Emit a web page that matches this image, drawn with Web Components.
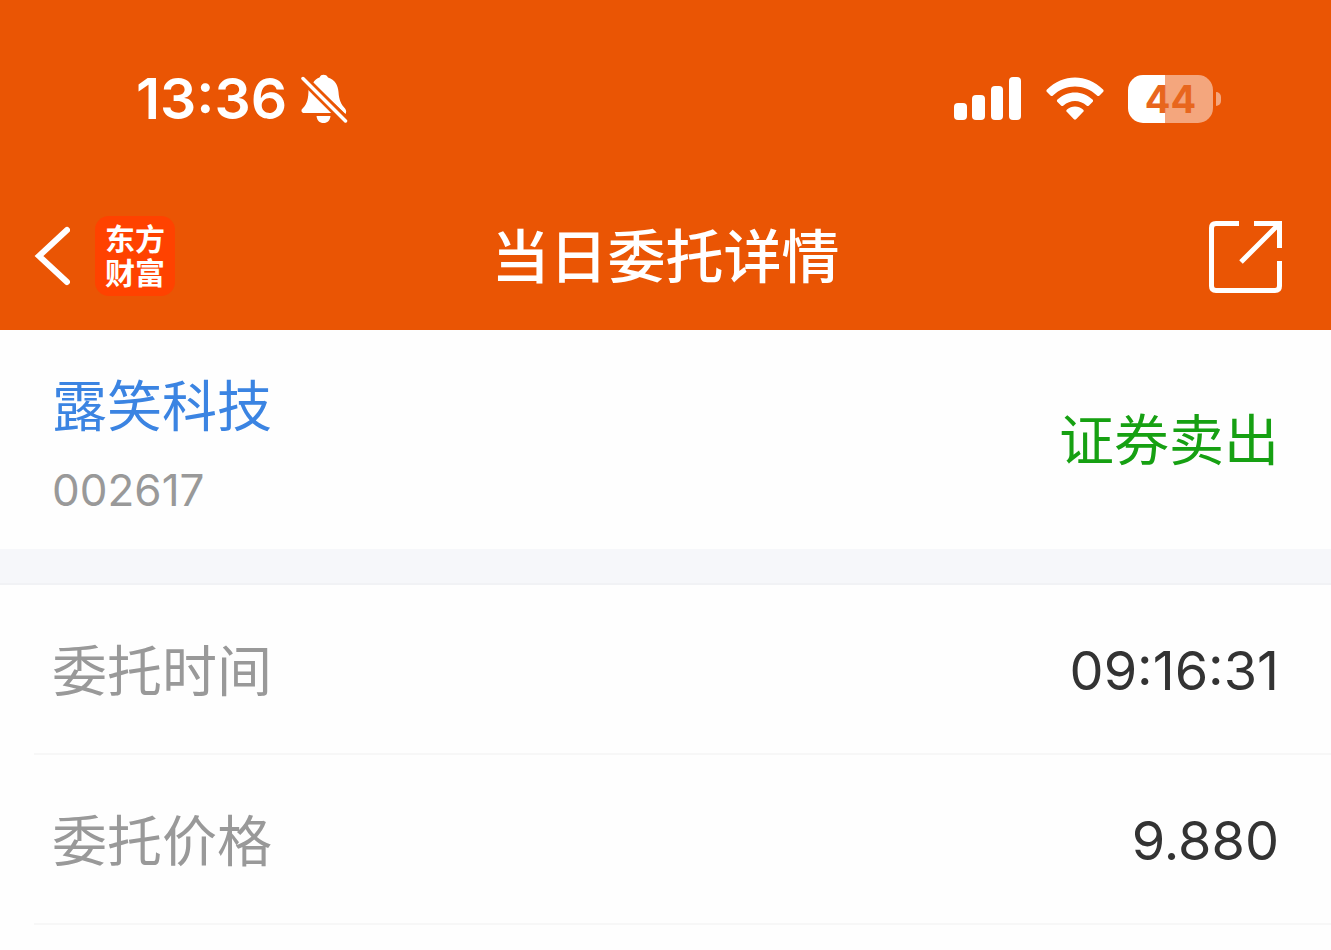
<!DOCTYPE html>
<html lang="zh-CN">
<head>
<meta charset="utf-8">
<meta name="viewport" content="width=device-width, initial-scale=1">
<title>当日委托详情</title>
<style>
  body {
    margin: 0;
    background: #fefefe;
    font-family: Inter, "Noto Sans CJK SC", sans-serif;
    --brand: #ea5504;
    --gutter: 52px;
    --text: 55px;
    --line: 72px;
  }
</style>
</head>
<body>
<order-page></order-page>

<template id="status-bar">
  <style>
    :host { display: flex; align-items: center; justify-content: space-between; height: 198px; padding: 0 110px 0 136px; color: #fff; }
    .group { display: flex; align-items: center; }
    .left { gap: 14px; }
    .right { gap: 24px; }
    time { font-size: 57px; font-weight: 600; line-height: 72px; }
    svg { display: block; fill: currentColor; }
  </style>
  <div class="group left">
    <time><slot name="time"></slot></time>
    <svg width="48" height="50" viewBox="0 0 48 50" role="img" aria-label="静音">
      <path d="M12 9C13.500 6 16 4.500 18.500 3.500C19.500 1.500 20.500 .8 22.500 .8S26 1.500 27 3.500C34 6 37 11 37.500 18C38 26 40 30 44 34.500C45.500 36.500 45.500 38 44.500 40Z"/>
      <path d="M7.500 15L32 39H4C0 39 -.5 36 2 34C6 30 7.500 25 7.500 15Z"/>
      <path d="M15.500 42H29.500C29 46.500 26.500 49 22.500 49S16 46.500 15.500 42Z"/>
      <path d="M2 4.500L44.500 47" fill="none" stroke="#ea5504" stroke-width="9"/>
      <path d="M2 4.500L44.500 47" fill="none" stroke="currentColor" stroke-width="3.500" stroke-linecap="round"/>
    </svg>
  </div>
  <div class="group right">
    <svg width="68" height="44" viewBox="0 0 68 44" role="img" aria-label="信号">
      <rect x="0" y="26" width="13" height="17" rx="4"/>
      <rect x="18" y="18" width="13" height="25" rx="4"/>
      <rect x="37" y="9" width="12" height="34" rx="4"/>
      <rect x="55" y="0" width="12" height="43" rx="4"/>
    </svg>
    <svg width="58" height="44" viewBox="0 0 58 44" role="img" aria-label="无线网络">
      <path d="M1 12.500C17 -3.500 41 -3.500 57 12.500C57.800 13.300 57.800 14.200 57 15L53.500 18.500C52.700 19.300 51.800 19.300 51 18.500C38.500 6.500 19.500 6.500 7 18.500C6.200 19.300 5.300 19.300 4.500 18.500L1 15C.2 14.200 .2 13.300 1 12.500Z"/>
      <path d="M11.500 22.500C21.500 13 36.500 13 46.500 22.500C47.300 23.300 47.300 24.200 46.500 25L43 28.500C42.200 29.300 41.300 29.200 40.500 28.500C34 22.500 24 22.500 17.500 28.500C16.700 29.200 15.800 29.300 15 28.500L11.500 25C10.700 24.200 10.700 23.300 11.500 22.500Z"/>
      <path d="M21 32.500C25.500 28.500 32.500 28.500 37 32.500C38 33.400 38 34.200 37 35L30.300 42C29.400 43 28.600 43 27.700 42L21 35C20 34.200 20 33.400 21 32.500Z"/>
    </svg>
    <battery-level><slot name="battery"></slot></battery-level>
  </div>
</template>

<template id="battery-level">
  <style>
    :host { display: flex; align-items: center; gap: 3px; }
    .cell { width: 85px; height: 48px; border-radius: 15px; background: linear-gradient(90deg, #fff 44%, #f4a67d 44%); color: #e8661d; font-size: 38px; font-weight: 700; line-height: 48px; text-align: center; }
    .cap { width: 5px; height: 14px; border-radius: 0 7px 7px 0; background: #f4a67d; }
  </style>
  <div class="cell"><slot></slot></div>
  <div class="cap"></div>
</template>

<template id="brand-logo">
  <style>
    :host { display: flex; flex-direction: column; justify-content: center; box-sizing: border-box; width: 80px; height: 80px; border-radius: 14px; background: #ff4200; color: #fff; font-size: 30px; font-weight: 700; line-height: 34px; text-align: center; }
  </style>
  <slot></slot>
</template>

<template id="nav-bar">
  <style>
    :host { display: grid; grid-template-columns: 1fr auto 1fr; align-items: center; height: 116px; padding: 0 34px 16px; color: #fff; }
    .left { display: flex; align-items: center; gap: 25px; }
    h1 { margin: 0; padding-top: 2px; font-size: 58px; font-weight: 500; line-height: 72px; }
    button { display: block; margin: 0; padding: 0; border: 0; background: none; color: inherit; }
    .share { justify-self: end; padding-right: 14px; }
    svg { display: block; fill: none; stroke: currentColor; }
  </style>
  <div class="left">
    <button type="button" aria-label="返回">
      <svg width="36" height="60" viewBox="0 0 36 60" stroke-width="6" stroke-linecap="round"><path d="M33 4L5 30L33 56"/></svg>
    </button>
    <slot name="logo"></slot>
  </div>
  <h1><slot></slot></h1>
  <button class="share" type="button" aria-label="分享">
    <svg width="75" height="74" viewBox="0 0 75 74" stroke-width="5">
      <path d="M31 4.500H8Q3.500 4.500 3.500 9V67Q3.500 71.500 8 71.500H67Q71.500 71.500 71.500 67V42"/>
      <path d="M46 4.500H71.500V29M71.500 4.500L33 43"/>
    </svg>
  </button>
</template>

<template id="stock-summary">
  <style>
    :host { display: flex; align-items: center; justify-content: space-between; padding: 40px var(--gutter) 29px; border-bottom: 34px solid #f6f7fa; box-shadow: 0 2px #f1f2f5; margin-bottom: 2px; }
    .stock { display: grid; gap: 18px; }
    a { color: #3b84e2; font-size: var(--text); line-height: var(--line); text-decoration: none; }
    .code { color: #999; font-size: 44px; line-height: 60px; }
    .side { padding-bottom: 10px; color: #16a012; font-size: var(--text); line-height: var(--line); }
  </style>
  <div class="stock">
    <a href="#002617"><slot name="name"></slot></a>
    <div class="code"><slot name="code"></slot></div>
  </div>
  <div class="side"><slot name="side"></slot></div>
</template>

<template id="detail-row">
  <style>
    :host { display: flex; align-items: center; justify-content: space-between; box-sizing: border-box; height: 170px; margin-left: 34px; padding: 4px var(--gutter) 0 18px; border-bottom: 2px solid #f7f7f7; line-height: var(--line); }
    .label { color: #999; font-size: var(--text); }
    .value { color: #333; font-size: 54px; }
  </style>
  <span class="label" id="label"><slot name="label"></slot></span>
  <span class="value" aria-labelledby="label"><slot></slot></span>
</template>

<template id="order-page">
  <style>
    :host { display: block; }
    header { background: var(--brand); }
  </style>
  <header>
    <status-bar><span slot="time">13:36</span><span slot="battery">44</span></status-bar>
    <nav-bar>
      <brand-logo slot="logo"><span>东方</span><span>财富</span></brand-logo>
      当日委托详情
    </nav-bar>
  </header>
  <main>
    <stock-summary>
      <span slot="name">露笑科技</span>
      <span slot="code">002617</span>
      <span slot="side">证券卖出</span>
    </stock-summary>
    <detail-row><span slot="label">委托时间</span>09:16:31</detail-row>
    <detail-row><span slot="label">委托价格</span>9.880</detail-row>
  </main>
</template>

<script>
  class TemplateElement extends HTMLElement {
    constructor() {
      super();
      const template = document.getElementById(this.localName);
      this.attachShadow({ mode: "open" }).append(document.importNode(template.content, true));
    }
  }
  customElements.define("battery-level", class BatteryLevel extends TemplateElement {});
  customElements.define("status-bar", class StatusBar extends TemplateElement {});
  customElements.define("brand-logo", class BrandLogo extends TemplateElement {});
  customElements.define("nav-bar", class NavBar extends TemplateElement {});
  customElements.define("stock-summary", class StockSummary extends TemplateElement {});
  customElements.define("detail-row", class DetailRow extends TemplateElement {});
  customElements.define("order-page", class OrderPage extends TemplateElement {});
</script>
</body>
</html>
